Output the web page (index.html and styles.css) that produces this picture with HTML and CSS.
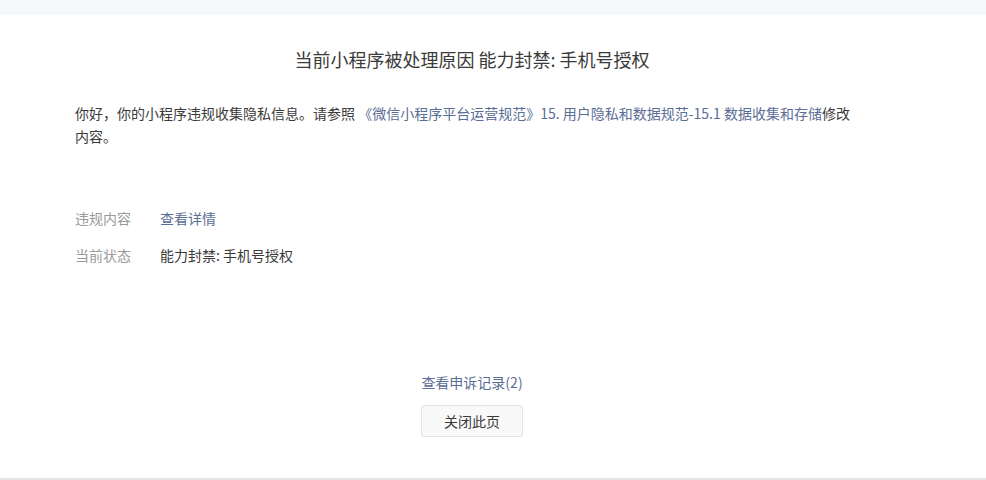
FILE: index.html
```html
<!DOCTYPE html>
<html lang="zh-CN">
<head>
<meta charset="utf-8">
<title>处理原因</title>
<link rel="stylesheet" href="styles.css">
</head>
<body>
<div class="page">
  <div class="topbar"></div>
  <div class="main">
    <h1 class="title">当前小程序被处理原因 能力封禁: 手机号授权</h1>
    <p class="desc">你好，你的小程序违规收集隐私信息。请参照 <a class="link" href="#">《微信小程序平台运营规范》15. 用户隐私和数据规范-15.1 数据收集和存储</a>修改内容。</p>
    <div class="info">
      <div class="row"><span class="label">违规内容</span><a class="value link" href="#">查看详情</a></div>
      <div class="row"><span class="label">当前状态</span><span class="value">能力封禁: 手机号授权</span></div>
    </div>
    <div class="actions">
      <a class="link record" href="#">查看申诉记录(2)</a>
      <button class="btn" type="button">关闭此页</button>
    </div>
  </div>
  <div class="footer"></div>
</div>
</body>
</html>
```

FILE: styles.css
```css
html, body {
  margin: 0;
  padding: 0;
  background: #fff;
}
body {
  font-family: "Noto Sans CJK SC", "Noto Sans", sans-serif;
  color: #3a3a3a;
  font-size: 14px;
}
.page {
  display: flex;
  flex-direction: column;
  height: 480px;
}
.topbar {
  height: 15px;
  background: #f7f8fa;
}
.main {
  flex: 1;
  padding: 0 117px 0 75px;
  display: flex;
  flex-direction: column;
}
.title {
  margin: 31px 0 0;
  font-size: 18px;
  font-weight: 400;
  line-height: 26px;
  text-align: center;
  color: #3a3a3a;
}
.desc {
  margin: 30px 0 0;
  max-width: 786px;
  font-size: 14px;
  line-height: 23px;
}
.link {
  color: #5a6d96;
  text-decoration: none;
}
.info {
  margin-top: 60px;
  display: flex;
  flex-direction: column;
  gap: 17px;
}
.row {
  display: flex;
  line-height: 20px;
}
.label {
  width: 85px;
  color: #9a9a9a;
}
.actions {
  margin-top: 107px;
  display: flex;
  flex-direction: column;
  align-items: center;
}
.record {
  line-height: 20px;
}
.btn {
  margin-top: 13px;
  width: 102px;
  height: 32px;
  border: 1px solid #e5e5e5;
  border-radius: 3px;
  background: #f9f9f9;
  color: #3a3a3a;
  font-family: inherit;
  font-size: 14px;
  padding: 0;
}
.footer {
  height: 2px;
  background: #e5e5e5;
}
```
